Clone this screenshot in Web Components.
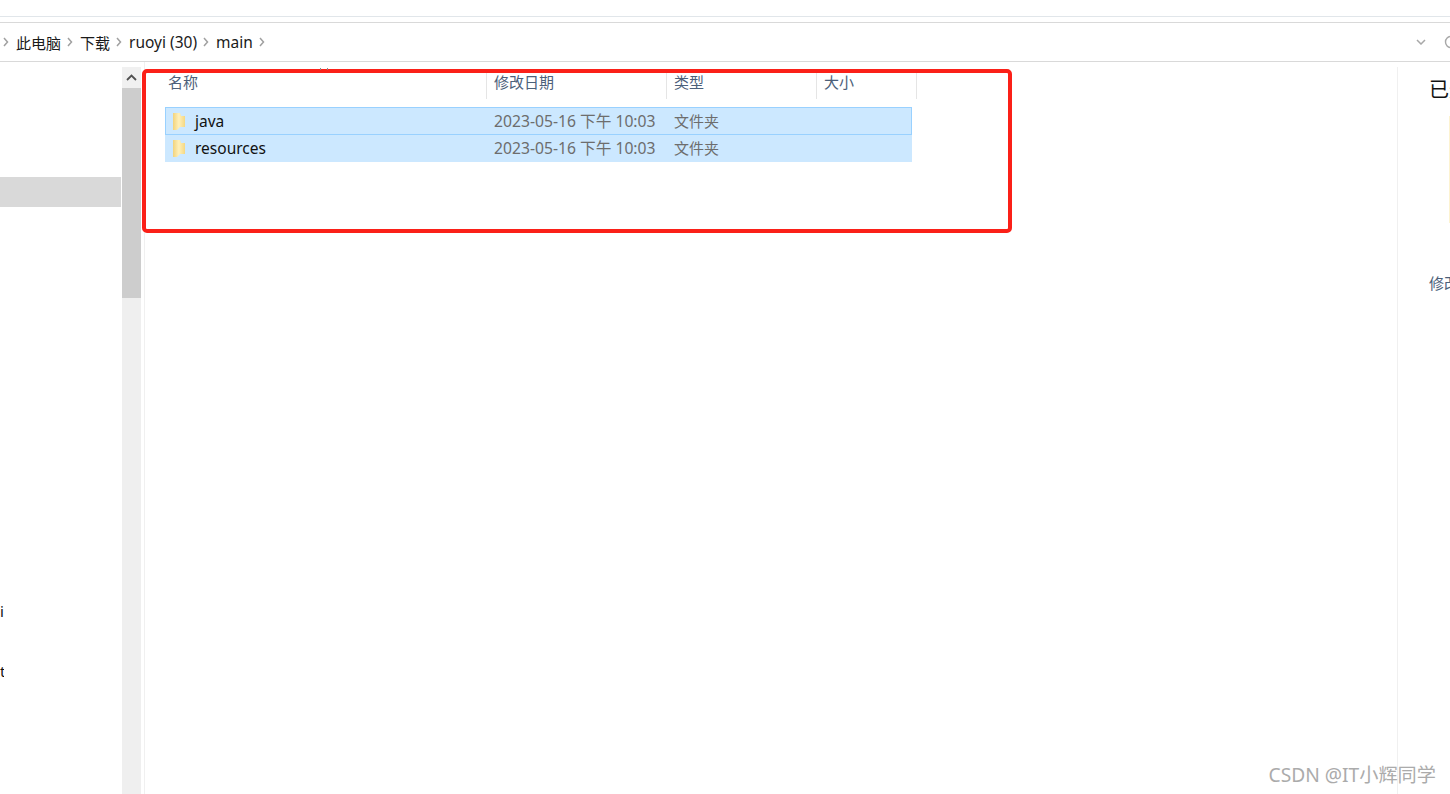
<!DOCTYPE html>
<html>
<head>
<meta charset="utf-8">
<style>
  html, body { margin: 0; padding: 0; background: #fff; }
  body {
    width: 1450px;
    height: 794px;
    overflow: hidden;
    position: relative;
    font-family: "Noto Sans", "Noto Sans CJK SC", sans-serif;
    font-size: 15px;
  }
</style>
</head>
<body>
  <fx-window>
    <fx-address slot="top">
      <fx-crumb>此电脑</fx-crumb>
      <fx-crumb>下载</fx-crumb>
      <fx-crumb latin>ruoyi (30)</fx-crumb>
      <fx-crumb latin>main</fx-crumb>
    </fx-address>
    <fx-sidebar slot="left"></fx-sidebar>
    <fx-scrollbar slot="left"></fx-scrollbar>
    <fx-list slot="main">
      <fx-row name="java" date="2023-05-16 下午 10:03" type="文件夹" focused></fx-row>
      <fx-row name="resources" date="2023-05-16 下午 10:03" type="文件夹"></fx-row>
    </fx-list>
    <fx-preview slot="right"></fx-preview>
  </fx-window>
  <fx-mark></fx-mark>
  <fx-watermark>CSDN @IT小辉同学</fx-watermark>

<script>
class FxWindow extends HTMLElement {
  constructor() {
    super()
    this.attachShadow({ mode: 'open' })
    this.shadowRoot.innerHTML = `
      <style>
        :host { display: flex; flex-direction: column; height: 794px; }
        .strip { height: 16px; flex: none; border-bottom: 1px solid #e1e6ea; }
        .gap { height: 5px; flex: none; }
        .body { flex: 1; display: flex; min-height: 0; }
        .left { display: flex; flex: none; }
        .main { flex: 1; min-width: 0; border-left: 1px solid #f0f0f0; margin-left: 3px; }
        .right { flex: none; }
      </style>
      <div class="strip"></div>
      <div class="gap"></div>
      <slot name="top"></slot>
      <div class="body">
        <div class="left"><slot name="left"></slot></div>
        <div class="main"><slot name="main"></slot></div>
        <div class="right"><slot name="right"></slot></div>
      </div>
    `
  }
}

class FxAddress extends HTMLElement {
  constructor() {
    super()
    this.attachShadow({ mode: 'open' })
    this.shadowRoot.innerHTML = `
      <style>
        :host {
          display: flex;
          align-items: center;
          height: 38px;
          flex: none;
          border-top: 1px solid #d9d9d9;
          border-bottom: 1px solid #d9d9d9;
          padding-left: 3px;
          position: relative;
        }
        svg { flex: none; display: block; }
        .tail { display: flex; align-items: center; margin-left: auto; gap: 18px; }
        .refresh { margin-right: -6px; }
      </style>
      <svg width="13" height="10" viewBox="0 0 13 10"><path d="M1 1l3.500 4L1 9" fill="none" stroke="#a0a0a0" stroke-width="1.500"/></svg>
      <slot></slot>
      <div class="tail">
        <svg width="10" height="6" viewBox="0 0 10 6"><path d="M1 1l4 4 4-4" fill="none" stroke="#a8a8a8" stroke-width="1.500"/></svg>
        <svg class="refresh" width="12" height="14" viewBox="0 0 12 14"><circle cx="7" cy="7" r="5.500" fill="none" stroke="#a8a8a8" stroke-width="1.400"/></svg>
      </div>
    `
  }
}

class FxCrumb extends HTMLElement {
  constructor() {
    super()
    this.attachShadow({ mode: 'open' })
    this.shadowRoot.innerHTML = `
      <style>
        :host { display: flex; align-items: center; color: #1a1a1a; white-space: nowrap; }
        :host([latin]) { font-size: 15.500px; }
        svg { display: block; margin: 0 5px 0 5px; }
      </style>
      <slot></slot>
      <svg width="9" height="10" viewBox="0 0 9 10"><path d="M2 1l3.500 4L2 9" fill="none" stroke="#a0a0a0" stroke-width="1.500"/></svg>
    `
  }
}

class FxSidebar extends HTMLElement {
  constructor() {
    super()
    this.attachShadow({ mode: 'open' })
    this.shadowRoot.innerHTML = `
      <style>
        :host { display: block; width: 122px; flex: none; overflow: hidden; color: #111; }
        .sel { height: 30px; width: 121px; margin-top: 115px; background: #d9d9d9; }
        .t { height: 20px; line-height: 20px; width: 4px; overflow: hidden; }
        .i { margin-top: 394px; }
        .n { margin-top: 40px; }
      </style>
      <div class="sel"></div>
      <div class="t i">i</div>
      <div class="t n">t</div>
    `
  }
}

class FxScrollbar extends HTMLElement {
  constructor() {
    super()
    this.attachShadow({ mode: 'open' })
    this.shadowRoot.innerHTML = `
      <style>
        :host { display: flex; flex-direction: column; width: 19px; flex: none; margin-top: 5px; background: #efefef; }
        .up { height: 21px; display: flex; align-items: center; justify-content: center; background: #f0f0f0; }
        svg { display: block; }
        .thumb { height: 210px; background: #cdcdcd; }
      </style>
      <div class="up">
        <svg width="11" height="7" viewBox="0 0 11 7"><path d="M1 6l4.500-4.500L10 6" fill="none" stroke="#505050" stroke-width="1.800"/></svg>
      </div>
      <div class="thumb"></div>
    `
  }
}

class FxList extends HTMLElement {
  constructor() {
    super()
    this.attachShadow({ mode: 'open' })
    this.shadowRoot.innerHTML = `
      <style>
        :host { display: block; }
        .head {
          display: grid;
          grid-template-columns: 342px 180px 150px 100px;
          height: 29px;
          margin-top: 8px;
          color: #4c607a;
          line-height: 24px;
        }
        .head div { padding-left: 7px; border-right: 1px solid #e5e5e5; box-sizing: border-box; }
        .head div:first-child { padding-left: 23px; }
        .rows { margin: 8px 0 0 20px; width: 747px; }
      </style>
      <div class="head">
        <div>名称</div><div>修改日期</div><div>类型</div><div>大小</div>
      </div>
      <div class="rows"><slot></slot></div>
    `
  }
}

class FxRow extends HTMLElement {
  constructor() {
    super()
    this.attachShadow({ mode: 'open' })
    this.shadowRoot.innerHTML = `
      <style>
        :host {
          display: grid;
          grid-template-columns: 329px 180px 1fr;
          align-items: center;
          height: 27px;
          padding-bottom: 1px;
          line-height: 20px;
          box-sizing: border-box;
          background: #cce8ff;
          white-space: nowrap;
        }
        :host([focused]) { outline: 1px solid #99d1ff; outline-offset: -1px; height: 28px; padding-bottom: 0; }
        .name { display: flex; align-items: center; color: #111; gap: 9px; padding-left: 8px; font-size: 15.500px; }
        svg { display: block; flex: none; }
        .d { font-size: 15.700px; }
        .dim { color: #6d6d6d; }
      </style>
      <div class="name">
        <svg width="13" height="17" viewBox="0 0 13 17">
          <defs><linearGradient id="f" gradientUnits="userSpaceOnUse" x1="0" x2="13" y1="0" y2="0">
            <stop offset="0" stop-color="#f2d37c"/><stop offset=".45" stop-color="#fff0ba"/><stop offset="1" stop-color="#f3d479"/>
          </linearGradient></defs>
          <path d="M0 0h7l1 3h4v11H7l-3 3H0z" fill="url(#f)"/>
        </svg>
        <span class="n"></span>
      </div>
      <div class="dim d"></div>
      <div class="dim t"></div>
    `
  }

  connectedCallback() {
    this.shadowRoot.querySelector('.n').textContent = this.getAttribute('name')
    this.shadowRoot.querySelector('.d').textContent = this.getAttribute('date')
    this.shadowRoot.querySelector('.t').textContent = this.getAttribute('type')
  }
}

class FxPreview extends HTMLElement {
  constructor() {
    super()
    this.attachShadow({ mode: 'open' })
    this.shadowRoot.innerHTML = `
      <style>
        :host {
          display: block;
          width: 53px;
          height: 100%;
          box-sizing: border-box;
          margin-top: 5px;
          border-left: 1px solid #f0f0f0;
          padding-left: 31px;
          overflow: hidden;
          white-space: nowrap;
        }
        .title { font-size: 20px; line-height: 28px; margin-top: 9px; color: #111; }
        .thumb { margin: 12px 0 0 20px; width: 1px; height: 107px; background: #fdf3d0; }
        .label { margin-top: 50px; color: #4c607a; line-height: 20px; }
      </style>
      <div class="title">已选择 2 个项目</div>
      <div class="thumb"></div>
      <div class="label">修改日期</div>
    `
  }
}

class FxMark extends HTMLElement {
  constructor() {
    super()
    this.attachShadow({ mode: 'open' })
    this.shadowRoot.innerHTML = `
      <style>
        :host {
          position: absolute;
          left: 142px;
          top: 69px;
          width: 870px;
          height: 164px;
          box-sizing: border-box;
          border: 4px solid #fb2018;
          border-radius: 5px;
          pointer-events: none;
        }
        i { position: absolute; top: -5px; width: 1px; height: 2px; background: #8a8a8a; }
      </style>
      <i style="left:174px"></i><i style="left:181px"></i>
    `
  }
}

class FxWatermark extends HTMLElement {
  constructor() {
    super()
    this.attachShadow({ mode: 'open' })
    this.shadowRoot.innerHTML = `
      <style>
        :host {
          position: absolute;
          right: 14px;
          top: 762px;
          color: #ababab;
          font-size: 19.200px;
          line-height: 26px;
          white-space: nowrap;
        }
      </style>
      <slot></slot>
    `
  }
}

customElements.define('fx-window', FxWindow)
customElements.define('fx-address', FxAddress)
customElements.define('fx-crumb', FxCrumb)
customElements.define('fx-sidebar', FxSidebar)
customElements.define('fx-scrollbar', FxScrollbar)
customElements.define('fx-list', FxList)
customElements.define('fx-row', FxRow)
customElements.define('fx-preview', FxPreview)
customElements.define('fx-mark', FxMark)
customElements.define('fx-watermark', FxWatermark)
</script>
</body>
</html>
